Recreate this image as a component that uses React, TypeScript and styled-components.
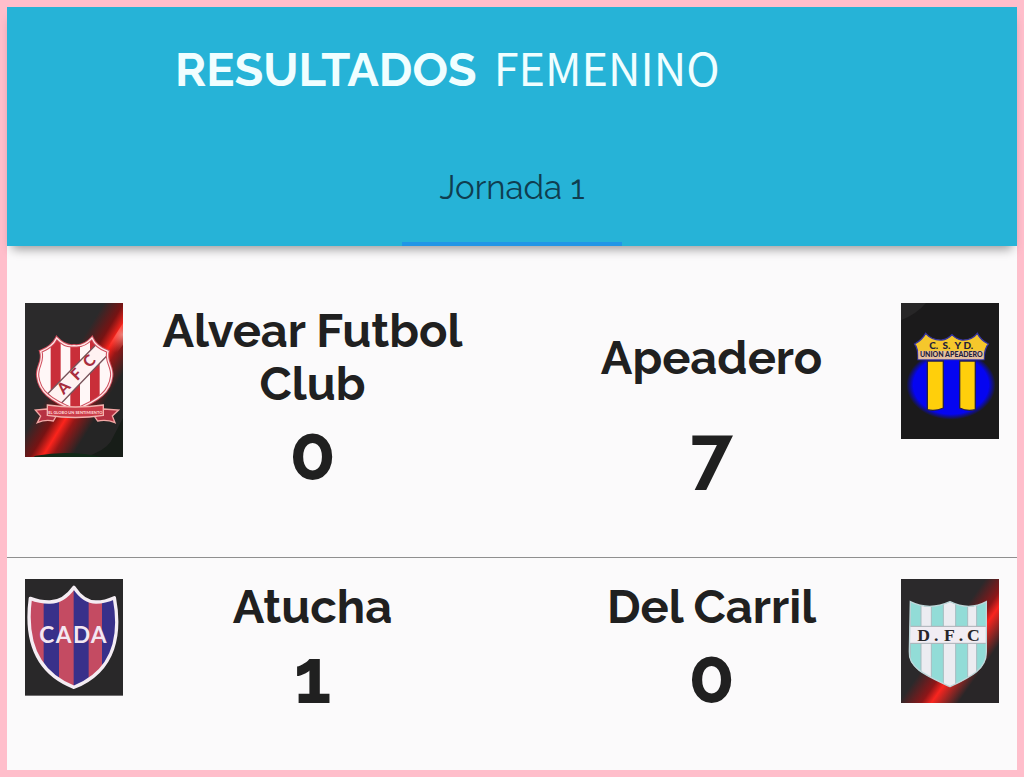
import React from "react";
import styled, { createGlobalStyle } from "styled-components";

const GlobalStyle = createGlobalStyle`
  * { box-sizing: border-box; }
  body { margin: 0; background: #fbfafb; }
`;

const Page = styled.main`
  min-height: 100vh;
  border: 7px solid #ffbecb;
  background: #fbfafb;
  color: #202020;
  font-family: Raleway, Lato, sans-serif;
`;

const Header = styled.header`
  display: flex;
  flex-direction: column;
  height: 239px;
  background: #26b3d7;
  box-shadow: 0 8px 10px -5px rgba(0, 0, 0, 0.4);
`;

const Title = styled.h1`
  display: flex;
  align-items: baseline;
  gap: 17px;
  margin: 0;
  padding: 28px 0 0 168px;
  color: #f0feff;
  font-size: 47px;
  line-height: 64px;
  font-weight: 700;
`;

const Category = styled.span`
  font-family: "Noto Sans CJK SC", sans-serif;
  font-size: 45px;
  font-weight: 400;
`;

const Tabs = styled.nav`
  display: flex;
  flex: 1;
  align-items: flex-end;
  justify-content: center;
`;

const Tab = styled.button`
  width: 220px;
  height: 116px;
  padding: 4px 0 0;
  border: 0;
  border-bottom: 4px solid #2196e6;
  background: transparent;
  color: #0f3d50;
  font: 400 33px/108px Raleway, Lato, sans-serif;
`;

const Matches = styled.ul`
  margin: 0;
  padding: 0;
  list-style: none;
`;

const Match = styled.li`
  display: grid;
  grid-template-columns: 98px 1fr 1fr 98px;
  padding: 57px 18px 52px;

  & + & {
    padding: 21px 18px 40px;
    border-top: 1px solid #8f8f8f;
  }
`;

const Team = styled.section<{ $side: "home" | "away" }>`
  display: flex;
  flex-direction: column;
  padding: ${({ $side }) => ($side === "home" ? "1px 28px 8px 18px" : "1px 18px 8px 28px")};
  text-align: center;
`;

const Name = styled.h2`
  display: flex;
  flex: 1;
  align-items: center;
  justify-content: center;
  margin: 0;
  font-size: 47px;
  line-height: 53px;
  font-weight: 700;
`;

const Score = styled.p`
  margin: 0;
  font-size: 76px;
  line-height: 87px;
  font-weight: 700;
`;

const Crest = styled.svg`
  display: block;
  width: 98px;
  height: auto;
`;

function AlvearCrest() {
  const shield = "M95 105Q120 132 147 128Q177 132 201 105Q212 132 249 145C240 175 264 190 260 220C255 265 224 291 149 321C74 291 43 265 38 220C34 190 58 175 47 145Q82 132 95 105Z";
  return (
    <Crest viewBox="0 0 294 462" role="img" aria-label="Alvear Futbol Club">
      <defs>
        <linearGradient id="beam" gradientUnits="userSpaceOnUse" x1="105" y1="217" x2="240" y2="299">
          <stop offset="0" stopColor="#2b2a2b" />
          <stop offset=".32" stopColor="#771313" />
          <stop offset=".52" stopColor="#fc241c" />
          <stop offset=".68" stopColor="#951717" />
          <stop offset="1" stopColor="#252525" />
        </linearGradient>
        <radialGradient id="beamGlare" cx="294" cy="95" r="60" gradientUnits="userSpaceOnUse">
          <stop offset="0" stopColor="#ffb3aa" stopOpacity=".7" />
          <stop offset="1" stopColor="#ff4a40" stopOpacity="0" />
        </radialGradient>
        <clipPath id="alvearShield"><path d={shield} /></clipPath>
      </defs>
      <rect width="294" height="462" fill="url(#beam)" />
      <path d="M294 60V125L245 190L232 158Z" fill="url(#beamGlare)" />
      <path d="M294 345V462H180Q238 444 257 416Z" fill="#171d18" />
      <path d="M32 458Q135 440 230 462H25Z" fill="#112a18" />
      <g clipPath="url(#alvearShield)">
        <rect x="30" y="95" width="245" height="235" fill="#fff7f7" />
        <path d="M77 90h30v240H77zM136 90h29v240h-29zM195 90h29v240h-29z" fill="#c92e39" />
        <path d="M68 272L218 120L253 151L103 307Z" fill="#fff2f2" stroke="#78545b" strokeWidth="4" />
        <g fill="#a72d3e" fontFamily="Lato, sans-serif" fontWeight="900" fontSize="47" textAnchor="middle">
          <text transform="translate(128 265) rotate(-46)">A</text>
          <text transform="translate(166 225) rotate(-46)">F</text>
          <text transform="translate(204 185) rotate(-46)">C</text>
        </g>
      </g>
      <path d={shield} fill="none" stroke="#cf4d5c" strokeWidth="10" />
      <path d={shield} fill="none" stroke="#ffe8e8" strokeWidth="4" />
      <path d="M66 318L31 321L47 339L37 359Q62 348 85 354L92 342ZM236 318L281 321L262 339L270 359Q245 348 218 354L210 342Z" fill="#b63142" stroke="#f3a8a5" strokeWidth="4" />
      <path d="M67 306Q151 318 235 306V337Q151 350 67 337Z" fill="#cb3c48" stroke="#f2b2ae" strokeWidth="4" />
      <text x="151" y="333" textAnchor="middle" fill="#ffdeda" fontFamily="Lato, sans-serif" fontWeight="700" fontSize="12">EL GLOBO UN SENTIMIENTO</text>
    </Crest>
  );
}

function ApeaderoCrest() {
  return (
    <Crest viewBox="0 0 294 409" role="img" aria-label="Union Apeadero">
      <defs>
        <radialGradient id="blueGlow">
          <stop offset=".84" stopColor="#0505f1" />
          <stop offset="1" stopColor="#0505f1" stopOpacity="0" />
        </radialGradient>
      </defs>
      <rect width="294" height="409" fill="#1b1a1b" />
      <path d="M0 0H75Q48 32 0 52Z" fill="#272627" />
      <ellipse cx="150" cy="246" rx="134" ry="104" fill="url(#blueGlow)" />
      <path d="M79 174H127V315Q103 326 79 320ZM176 174H223V320Q198 326 176 315Z" fill="#ffcf0b" stroke="#252049" strokeWidth="4" />
      <path d="M74 91Q93 113 123 111Q139 109 153 95Q166 109 183 111Q211 113 229 91Q239 111 262 123Q250 137 249 170H51Q52 137 41 123Q63 111 74 91Z" fill="#f5c72c" stroke="#3534a1" strokeWidth="4" />
      <path d="M52 143H248V169H52Z" fill="#e5bea1" />
      <g fill="#222039" fontFamily="Lato, sans-serif" fontWeight="900" textAnchor="middle">
        <text x="98" y="137" fontSize="30">C.</text>
        <text x="136" y="137" fontSize="30">S.</text>
        <text x="170" y="137" fontSize="30">Y</text>
        <text x="202" y="137" fontSize="30">D.</text>
        <text x="151" y="163" fontSize="21">UNION APEADERO</text>
      </g>
    </Crest>
  );
}

function AtuchaCrest() {
  const shield = "M147 25Q176 69 213 69Q240 69 268 56C287 158 275 274 147 325C16 274 3 158 16 58Q47 70 75 69Q116 69 147 25Z";
  return (
    <Crest viewBox="0 0 294 350" role="img" aria-label="CADA">
      <defs><clipPath id="atuchaShield"><path d={shield} /></clipPath></defs>
      <rect width="294" height="350" fill="#292829" />
      <g clipPath="url(#atuchaShield)">
        <rect width="294" height="350" fill="#c44b62" />
        <path d="M56 0h46v350H56zM146 0h45v350h-45zM231 0h63v350h-63z" fill="#38308a" />
      </g>
      <path d={shield} fill="none" stroke="#f4edf3" strokeWidth="10" strokeLinejoin="round" />
      <g fill="#f3e7f1" fontFamily="Lato, sans-serif" fontWeight="700" fontSize="68" textAnchor="middle">
        <text x="65" y="191">C</text><text x="116" y="191">A</text><text x="170" y="191">D</text><text x="221" y="191">A</text>
      </g>
    </Crest>
  );
}

function CarrilCrest() {
  const shield = "M28 68Q85 96 147 68Q204 96 256 68V218C257 269 213 292 147 323C82 292 21 269 25 218Z";
  return (
    <Crest viewBox="0 0 294 372" role="img" aria-label="Del Carril">
      <defs>
        <linearGradient id="carrilBeam" gradientUnits="userSpaceOnUse" x1="128" y1="178" x2="248" y2="262">
          <stop offset="0" stopColor="#2b292b" />
          <stop offset=".38" stopColor="#8d1618" />
          <stop offset=".55" stopColor="#f9251f" />
          <stop offset="1" stopColor="#292628" />
        </linearGradient>
        <clipPath id="carrilShield"><path d={shield} /></clipPath>
      </defs>
      <rect width="294" height="372" fill="url(#carrilBeam)" />
      <g clipPath="url(#carrilShield)">
        <rect width="294" height="372" fill="#ececf1" />
        <path d="M28 0h32v372H28zM91 0h36v372H91zM164 0h36v372h-36zM227 0h33v372h-33z" fill="#92dcd7" stroke="#a6bcc0" strokeWidth="3" />
        <rect x="20" y="142" width="240" height="51" fill="#f1edf3" stroke="#aab0b6" strokeWidth="3" />
      </g>
      <path d={shield} fill="none" stroke="#bdd7da" strokeWidth="4" />
      <g fill="#272529" fontFamily="Liberation Serif, serif" fontWeight="700" fontSize="53" textAnchor="middle">
        <text x="68" y="186">D</text><text x="106" y="186">.</text><text x="145" y="186">F</text><text x="180" y="186">.</text><text x="217" y="186">C</text>
      </g>
    </Crest>
  );
}

interface TeamResultProps {
  side: "home" | "away";
  name: string;
  score: number;
}

function TeamResult({ side, name, score }: TeamResultProps) {
  return <Team $side={side}><Name>{name}</Name><Score>{score}</Score></Team>;
}

export default function App() {
  return (
    <>
      <GlobalStyle />
      <Page>
        <Header>
          <Title>RESULTADOS <Category>FEMENINO</Category></Title>
          <Tabs><Tab type="button">Jornada 1</Tab></Tabs>
        </Header>
        <Matches>
          <Match>
            <AlvearCrest />
            <TeamResult side="home" name="Alvear Futbol Club" score={0} />
            <TeamResult side="away" name="Apeadero" score={7} />
            <ApeaderoCrest />
          </Match>
          <Match>
            <AtuchaCrest />
            <TeamResult side="home" name="Atucha" score={1} />
            <TeamResult side="away" name="Del Carril" score={0} />
            <CarrilCrest />
          </Match>
        </Matches>
      </Page>
    </>
  );
}
